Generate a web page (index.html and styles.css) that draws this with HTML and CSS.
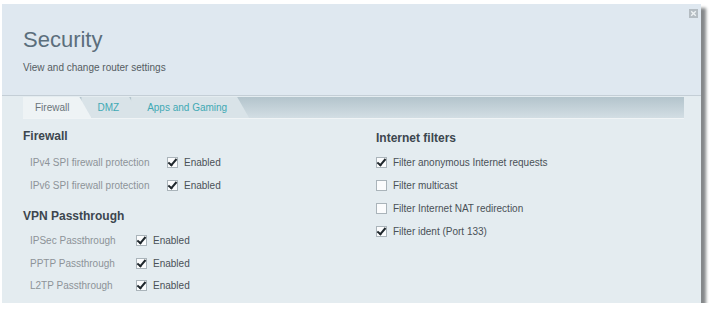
FILE: index.html
```html
<!DOCTYPE html>
<html lang="en">
<head>
  <meta charset="UTF-8">
  <title>Security</title>
  <link rel="stylesheet" href="styles.css">
</head>
<body>
  <div class="panel">
    <header class="head">
      <h1>Security</h1>
      <p>View and change router settings</p>
      <span class="close">
        <svg width="9" height="9" viewBox="0 0 9 9"><rect x="0" y="0" width="9" height="9" fill="#b4bcc2"/><path d="M2.2 2.2L6.8 6.8M6.8 2.2L2.2 6.8" stroke="#eef2f4" stroke-width="1.4"/></svg>
      </span>
    </header>
    <nav class="tabbar">
      <span class="tab active">Firewall</span>
      <span class="tab">DMZ</span>
      <span class="tab">Apps and Gaming</span>
    </nav>
    <main class="content">
      <section class="col left">
        <h2>Firewall</h2>
        <div class="row"><span class="label w1">IPv4 SPI firewall protection</span><span class="box on"></span><span class="val">Enabled</span></div>
        <div class="row"><span class="label w1">IPv6 SPI firewall protection</span><span class="box on"></span><span class="val">Enabled</span></div>
        <h2 class="second">VPN Passthrough</h2>
        <div class="row"><span class="label w2">IPSec Passthrough</span><span class="box on"></span><span class="val">Enabled</span></div>
        <div class="row"><span class="label w2">PPTP Passthrough</span><span class="box on"></span><span class="val">Enabled</span></div>
        <div class="row"><span class="label w2">L2TP Passthrough</span><span class="box on"></span><span class="val">Enabled</span></div>
      </section>
      <section class="col right">
        <h2>Internet filters</h2>
        <div class="row f"><span class="box on"></span><span class="val">Filter anonymous Internet requests</span></div>
        <div class="row f"><span class="box"></span><span class="val">Filter multicast</span></div>
        <div class="row f"><span class="box"></span><span class="val">Filter Internet NAT redirection</span></div>
        <div class="row f"><span class="box on"></span><span class="val">Filter ident (Port 133)</span></div>
      </section>
    </main>
  </div>
</body>
</html>
```
FILE: styles.css
```css
body {
  margin: 0;
  background: #ffffff;
  font-family: "Liberation Sans", Arial, sans-serif;
}
.panel {
  width: 699px;
  height: 299px;
  margin: 4px 0 0 2px;
  background: #e4ecf0;
  box-shadow: 5px 4px 3px #85888a;
  overflow: hidden;
}
.head {
  position: relative;
  height: 92px;
  background: #dfe8f0;
  border-bottom: 1px solid #c4ced6;
  padding: 0 21px;
  box-sizing: border-box;
}
.head h1 {
  margin: 0;
  padding-top: 23px;
  font-size: 22px;
  font-weight: normal;
  color: #5b6e7c;
}
.head p {
  margin: 9px 0 0;
  font-size: 10px;
  color: #555c62;
}
.close {
  position: absolute;
  right: 3px;
  top: 5px;
  line-height: 0;
}
.tabbar {
  display: flex;
  margin: 1px 17px 0 21px;
  height: 21px;
  background: linear-gradient(#b3c4cc, #d3dee4);
  border-bottom: 1px solid #f0f4f6;
}
.tab {
  display: flex;
  align-items: center;
  padding: 0 22px 0 16px;
  margin-right: -10px;
  font-size: 10px;
  color: #3fa9b4;
  background: #d9e3e8;
  clip-path: polygon(0 0, calc(100% - 12px) 0, 100% 100%, 0 100%);
}
.tab:first-child {
  padding-left: 12px;
}
.tab.active {
  color: #6a737a;
  background: #eef3f5;
  z-index: 1;
}
.content {
  display: flex;
  padding: 0 0 0 21px;
}
.col h2 {
  margin: 10px 0 8px;
  font-size: 12px;
  color: #3c464e;
}
.left {
  width: 353px;
}
.col h2.second {
  margin-top: 12px;
  margin-bottom: 6px;
}
.row {
  display: flex;
  align-items: center;
  height: 23px;
  font-size: 10px;
  padding-left: 7px;
}
.left .row:last-child,
.left .row:nth-last-child(2) {
  height: 22px;
}
.row.f {
  padding-left: 0;
}
.right h2 {
  margin-top: 12px;
  margin-bottom: 6px;
}
.label {
  color: #8d9398;
}
.w1 { width: 137px; }
.w2 { width: 106px; }
.val {
  color: #4a5157;
}
.box {
  width: 11px;
  height: 11px;
  margin-right: 6px;
  background: #fbfcfd;
  border: 1px solid #aab4ba;
  box-sizing: border-box;
  position: relative;
}
.box.on::after {
  content: "";
  position: absolute;
  left: 2px;
  top: -1px;
  width: 3px;
  height: 7px;
  border: solid #1f272c;
  border-width: 0 2px 2px 0;
  transform: rotate(40deg);
}
```
